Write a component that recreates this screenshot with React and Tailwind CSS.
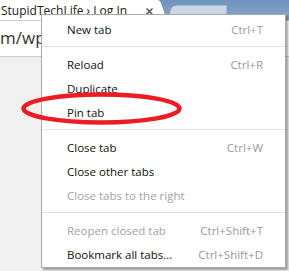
import React from 'react'

const items = [
  { label: 'New tab', key: 'Ctrl+T' },
  'sep',
  { label: 'Reload', key: 'Ctrl+R' },
  { label: 'Duplicate' },
  { label: 'Pin tab' },
  'sep',
  { label: 'Close tab', key: 'Ctrl+W' },
  { label: 'Close other tabs' },
  { label: 'Close tabs to the right', disabled: true },
  'sep',
  { label: 'Reopen closed tab', key: 'Ctrl+Shift+T', disabled: true },
  { label: 'Bookmark all tabs...', key: 'Ctrl+Shift+D' },
]

function TabStrip() {
  return (
    <div className="flex h-[20px] bg-[linear-gradient(180deg,#6f93bd_0%,#88a6c8_100%)]">
      <div className="w-[157px] bg-white flex items-start pt-[3px] pl-[1px] text-[12px] leading-[15px] text-[#202020]">
        <span className="flex-1 whitespace-nowrap">StupidTechLife › Log In</span>
        <svg width="7" height="7" viewBox="0 0 7 7" className="mt-[5px] mr-[4px]" aria-hidden="true">
          <path d="M0.5 0.5 L6.5 6.5 M6.5 0.5 L0.5 6.5" stroke="#4a4a4a" strokeWidth="1.4" />
        </svg>
      </div>
      <svg width="70" height="20" viewBox="0 0 70 20" aria-hidden="true">
        <path d="M10 20 L14 8 Q16 5 20 5 L70 5 L70 20 Z" fill="#c9d6e6" stroke="#7d98b8" strokeWidth="1" />
        <path d="M0 0 Q3 0 4 3 L9 18 Q10 20 12 20 L0 20 Z" fill="#ffffff" />
      </svg>
      <div className="flex-1" />
    </div>
  )
}

function MenuRow({ item }) {
  const tone = item.disabled ? 'text-[#a3a3a3]' : 'text-[#111]'
  return (
    <div className={`h-[24px] flex items-center pl-[25px] pr-[22px] ${tone}`}>
      <span className="flex-1 whitespace-nowrap">{item.label}</span>
      {item.key && <span className="text-[#9a9a9a]">{item.key}</span>}
    </div>
  )
}

export default function App() {
  return (
    <div
      className="relative w-[289px] h-[271px] overflow-hidden bg-[#f0f0f0]"
      style={{ fontFamily: '"Open Sans", "Noto Sans", sans-serif' }}
    >
      <TabStrip />
      <div className="h-[37px] bg-white border-y border-[#cfcfcf] flex items-center text-[17px] text-[#333] pb-[2px]">
        m/wp
      </div>

      <div className="absolute left-[41px] top-[14px] w-[245px] bg-white border border-[#a8a8a8] shadow-[2px_2px_2px_rgba(0,0,0,0.35)] pt-[3px] text-[11.5px]">
        {items.map((item, i) =>
          item === 'sep' ? (
            <div key={i} className="h-[11px] pt-[4px]">
              <div className="h-px bg-[#e3e3e3]" />
            </div>
          ) : (
            <MenuRow key={i} item={item} />
          )
        )}
      </div>

      <svg className="absolute left-[20px] top-[91px]" width="164" height="36" viewBox="0 0 164 36" aria-hidden="true">
        <ellipse cx="81.5" cy="17.5" rx="78" ry="14" fill="none" stroke="#ec1c24" strokeWidth="4.5" />
      </svg>
    </div>
  )
}
